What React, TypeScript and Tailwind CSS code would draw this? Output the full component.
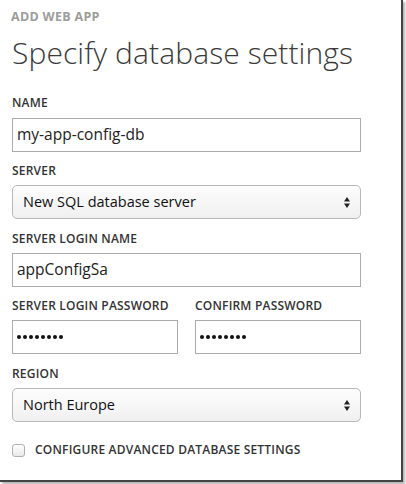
import React from 'react';

const font = { fontFamily: '"Open Sans", "Noto Sans", Arial, sans-serif' };

function Label({ children }: { children: React.ReactNode }) {
    return (
        <div className="text-[12px] font-semibold text-[#333] leading-[14px] tracking-[0.2px] whitespace-nowrap">
            {children}
        </div>
    );
}

function TextBox({ value }: { value: string }) {
    return (
        <div className="h-[34px] border border-[#acacac] bg-white flex items-center px-[4px] text-[15.5px] text-[#222]">
            {value}
        </div>
    );
}

function Dots() {
    return (
        <div className="h-[34px] border border-[#acacac] bg-white flex items-center px-[4px] gap-[2px]">
            {Array.from({ length: 8 }).map((_, i) => (
                <span key={i} className="w-[4px] h-[4px] rounded-full bg-[#111]" />
            ))}
        </div>
    );
}

function Select({ value }: { value: string }) {
    return (
        <div className="h-[34px] border border-[#b8b8b8] rounded-[5px] bg-gradient-to-b from-[#fdfdfd] to-[#f0f0f0] flex items-center justify-between pl-[10px] pr-[10px] text-[14.5px] text-[#111]">
            <span>{value}</span>
            <svg width="6" height="11" viewBox="0 0 6 11">
                <path d="M3 0 L6 4.5 L0 4.5 Z" fill="#222" />
                <path d="M3 11 L6 6.5 L0 6.5 Z" fill="#222" />
            </svg>
        </div>
    );
}

export default function App() {
    return (
        <div className="w-[406px] h-[484px] bg-white" style={font}>
            <div className="w-[403px] h-[482px] bg-white border-r-[2px] border-b-[2px] border-[#444] shadow-[2px_2px_2px_rgba(0,0,0,0.3)] pl-[12px] pr-[40px] pt-[9px]">
                <div className="text-[12.5px] font-bold text-[#9c9c9c] leading-[16px] tracking-[0.3px] -ml-[1px]">
                    ADD WEB APP
                </div>
                <h1 className="text-[30px] font-light text-[#3a3a3a] leading-[40px] mt-[8px] tracking-[0.1px]">
                    Specify database settings
                </h1>

                <div className="mt-[23px]">
                    <Label>NAME</Label>
                    <div className="mt-[8px]">
                        <TextBox value="my-app-config-db" />
                    </div>
                </div>

                <div className="mt-[12px]">
                    <Label>SERVER</Label>
                    <div className="mt-[7px]">
                        <Select value="New SQL database server" />
                    </div>
                </div>

                <div className="mt-[13px]">
                    <Label>SERVER LOGIN NAME</Label>
                    <div className="mt-[7px]">
                        <TextBox value="appConfigSa" />
                    </div>
                </div>

                <div className="mt-[12px] grid grid-cols-2 gap-x-[17px]">
                    <div>
                        <Label>SERVER LOGIN PASSWORD</Label>
                        <div className="mt-[7px]">
                            <Dots />
                        </div>
                    </div>
                    <div>
                        <Label>CONFIRM PASSWORD</Label>
                        <div className="mt-[7px]">
                            <Dots />
                        </div>
                    </div>
                </div>

                <div className="mt-[13px]">
                    <Label>REGION</Label>
                    <div className="mt-[7px]">
                        <Select value="North Europe" />
                    </div>
                </div>

                <div className="mt-[21px] flex items-center gap-[10px]">
                    <span className="w-[13px] h-[13px] rounded-[3px] border border-[#b0b0b0] bg-gradient-to-b from-white to-[#e9e9e9]" />
                    <Label>CONFIGURE ADVANCED DATABASE SETTINGS</Label>
                </div>
            </div>
        </div>
    );
}
